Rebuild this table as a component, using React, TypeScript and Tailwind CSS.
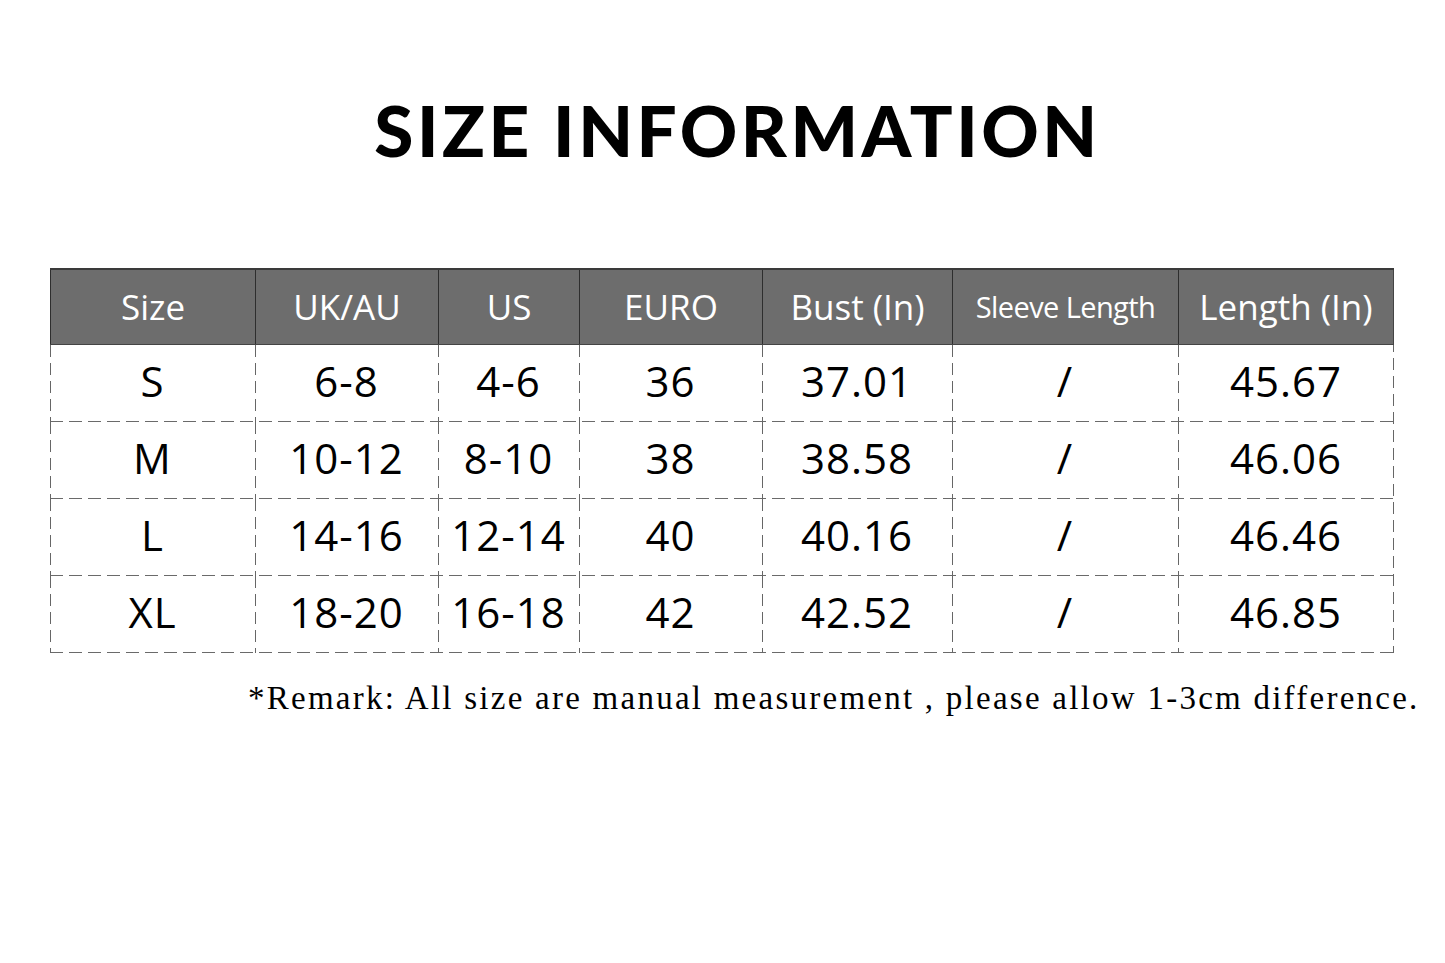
import React from "react";

const cols = [205, 183, 141, 183, 190, 226, 216];
const headers = ["Size", "UK/AU", "US", "EURO", "Bust (In)", "Sleeve Length", "Length (In)"];
const rows = [
  ["S", "6-8", "4-6", "36", "37.01", "/", "45.67"],
  ["M", "10-12", "8-10", "38", "38.58", "/", "46.06"],
  ["L", "14-16", "12-14", "40", "40.16", "/", "46.46"],
  ["XL", "18-20", "16-18", "42", "42.52", "/", "46.85"],
];

const gridCols = cols.map((c) => c + "px").join(" ");

export default function App() {
  return (
    <div className="w-[1445px] h-[963px] bg-white flex flex-col" style={{ fontFamily: "'Open Sans', 'Noto Sans', sans-serif" }}>
      <div className="h-[268px] flex justify-center pt-[94px] pl-[30px]">
        <h1
          className="text-[71px] leading-none font-black text-black tracking-[3.5px]"
          style={{ fontFamily: "Lato, sans-serif" }}
        >
          SIZE INFORMATION
        </h1>
      </div>
      <div className="ml-[50px] w-[1344px] bg-[repeating-linear-gradient(to_bottom,#666_0_12px,transparent_12px_18px)] bg-[length:1px_100%] bg-no-repeat bg-right">
        <div className="grid bg-[#6d6d6d] border-t-2 border-[#3a3a3a] border-b border-b-[#444]" style={{ gridTemplateColumns: gridCols }}>
          {headers.map((h, i) => (
            <div
              key={h}
              className={`h-[74px] flex items-center justify-center text-white border-l border-l-[#2e2e2e] ${i === 6 ? "border-r border-r-[#444]" : ""} ${i === 5 ? "text-[29px] tracking-[-0.6px]" : "text-[35px]"}`}
            >
              {h}
            </div>
          ))}
        </div>
        {rows.map((r, ri) => (
          <div
            key={ri}
            className="grid bg-[repeating-linear-gradient(to_right,#6a6a6a_0_13px,transparent_13px_19px)] bg-[length:100%_1.5px] bg-no-repeat bg-bottom"
            style={{ gridTemplateColumns: gridCols }}
          >
            {r.map((v, i) => (
              <div
                key={i}
                className="h-[77px] pb-[6px] flex items-center justify-center text-black text-[42px] tracking-[1px] bg-[repeating-linear-gradient(to_bottom,#666_0_12px,transparent_12px_18px)] bg-[length:1px_100%] bg-no-repeat bg-left"
              >
                {v}
              </div>
            ))}
          </div>
        ))}
      </div>
      <div className="pl-[248px] pt-[29px]">
        <p className="text-[33px] text-black leading-none tracking-[2.25px] whitespace-nowrap" style={{ fontFamily: "'Liberation Serif', serif" }}>
          *Remark: All size are manual measurement , please allow 1-3cm difference.
        </p>
      </div>
    </div>
  );
}
